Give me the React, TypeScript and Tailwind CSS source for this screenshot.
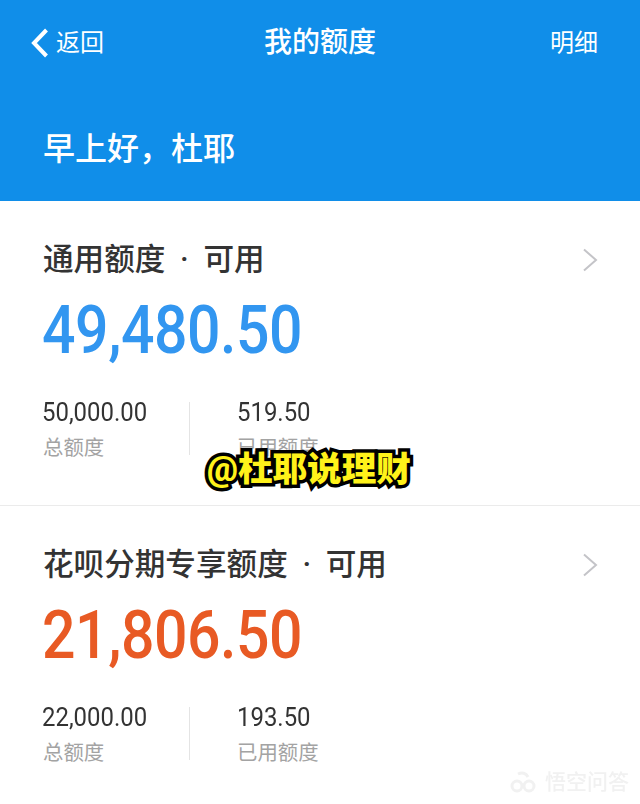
const cjk = "font-['Roboto','Noto_Sans_CJK_SC',sans-serif]";

function Chevron() {
  return (
    <svg width="16" height="24" viewBox="0 0 16 24" fill="none" className="text-[#c4c4c8]">
      <path d="M2 1.5 14 12 2 22.5" stroke="currentColor" strokeWidth="2" />
    </svg>
  );
}

function QuotaCard({
  title,
  amount,
  total,
  used,
  amountClass,
  bordered,
}: {
  title: string;
  amount: string;
  total: string;
  used: string;
  amountClass: string;
  bordered?: boolean;
}) {
  return (
    <section className={`h-[305px] pt-[39px] pl-[43px] pr-[42px] ${bordered ? "border-b border-[#ebebeb]" : ""}`}>
      <div className="flex h-[40px] items-center justify-between">
        <h2 className="flex text-[30.6px] leading-[40px] font-medium text-[#333]">
          {title}
          <span className="w-[38px] text-center">·</span>
          可用
        </h2>
        <Chevron />
      </div>
      <div className={`mt-[10px] -ml-px h-[80px] origin-left scale-x-[0.88] text-[67px] leading-[80px] font-medium tracking-[-0.5px] ${amountClass}`}>
        {amount}
      </div>
      <div className="mt-[22px] flex">
        <div className="w-[146px]">
          <div className="-ml-px h-[40px] origin-left scale-x-[0.92] text-[26px] leading-[40px] text-[#333]">{total}</div>
          <div className="h-[32px] text-[20.4px] leading-[32px] text-[#a3a3a3]">总额度</div>
        </div>
        <div className="mt-[10px] h-[53px] w-px bg-[#e4e4e4]" />
        <div className="pl-[47px]">
          <div className="h-[40px] origin-left scale-x-[0.92] text-[26px] leading-[40px] text-[#333]">{used}</div>
          <div className="h-[32px] text-[20.4px] leading-[32px] text-[#a3a3a3]">已用额度</div>
        </div>
      </div>
    </section>
  );
}

export default function App() {
  return (
    <div className={`relative h-[804px] w-[640px] overflow-hidden bg-white ${cjk}`}>
      <header className="h-[201px] bg-[#108ee9] text-white">
        <div className="flex h-[85px] items-center pl-[31px] pr-[42px]">
          <div className="flex w-[180px] items-center">
            <svg width="18" height="30" viewBox="0 0 18 30" fill="none">
              <path d="M15.5 2 3 15l12.5 13" stroke="currentColor" strokeWidth="4" />
            </svg>
            <span className="ml-[7px] text-[24px] leading-[32px]">返回</span>
          </div>
          <h1 className="flex-1 text-center text-[28px] leading-[36px] font-medium">我的额度</h1>
          <div className="w-[169px] text-right text-[24px] leading-[32px]">明细</div>
        </div>
        <div className="pt-[42px] pl-[43px] text-[32px] leading-[44px] font-medium">早上好，杜耶</div>
      </header>

      <QuotaCard
        title="通用额度"
        amount="49,480.50"
        total="50,000.00"
        used="519.50"
        amountClass="text-[#3296f0]"
        bordered
      />
      <QuotaCard
        title="花呗分期专享额度"
        amount="21,806.50"
        total="22,000.00"
        used="193.50"
        amountClass="text-[#e85a24]"
      />

      {/* video watermark over the card */}
      <div className="absolute top-[447px] left-[207px] text-[34.6px] leading-[44px] font-black whitespace-nowrap text-[#fff21a] [-webkit-text-stroke:7px_#000] [paint-order:stroke_fill]">
        @杜耶说理财
      </div>

      {/* faint site logo, bottom right */}
      <div className="absolute top-[768px] left-[510px] flex items-center gap-[9px] text-[#f1f1f1] blur-[0.5px]">
        <svg width="26" height="22" viewBox="0 0 26 22" fill="none" stroke="currentColor" strokeWidth="3">
          <circle cx="7" cy="15" r="5" />
          <circle cx="19" cy="15" r="5" />
          <path d="M8 3c4-2 8-1 10 3" />
        </svg>
        <span className="text-[21px] leading-[28px] font-medium">悟空问答</span>
      </div>
    </div>
  );
}
